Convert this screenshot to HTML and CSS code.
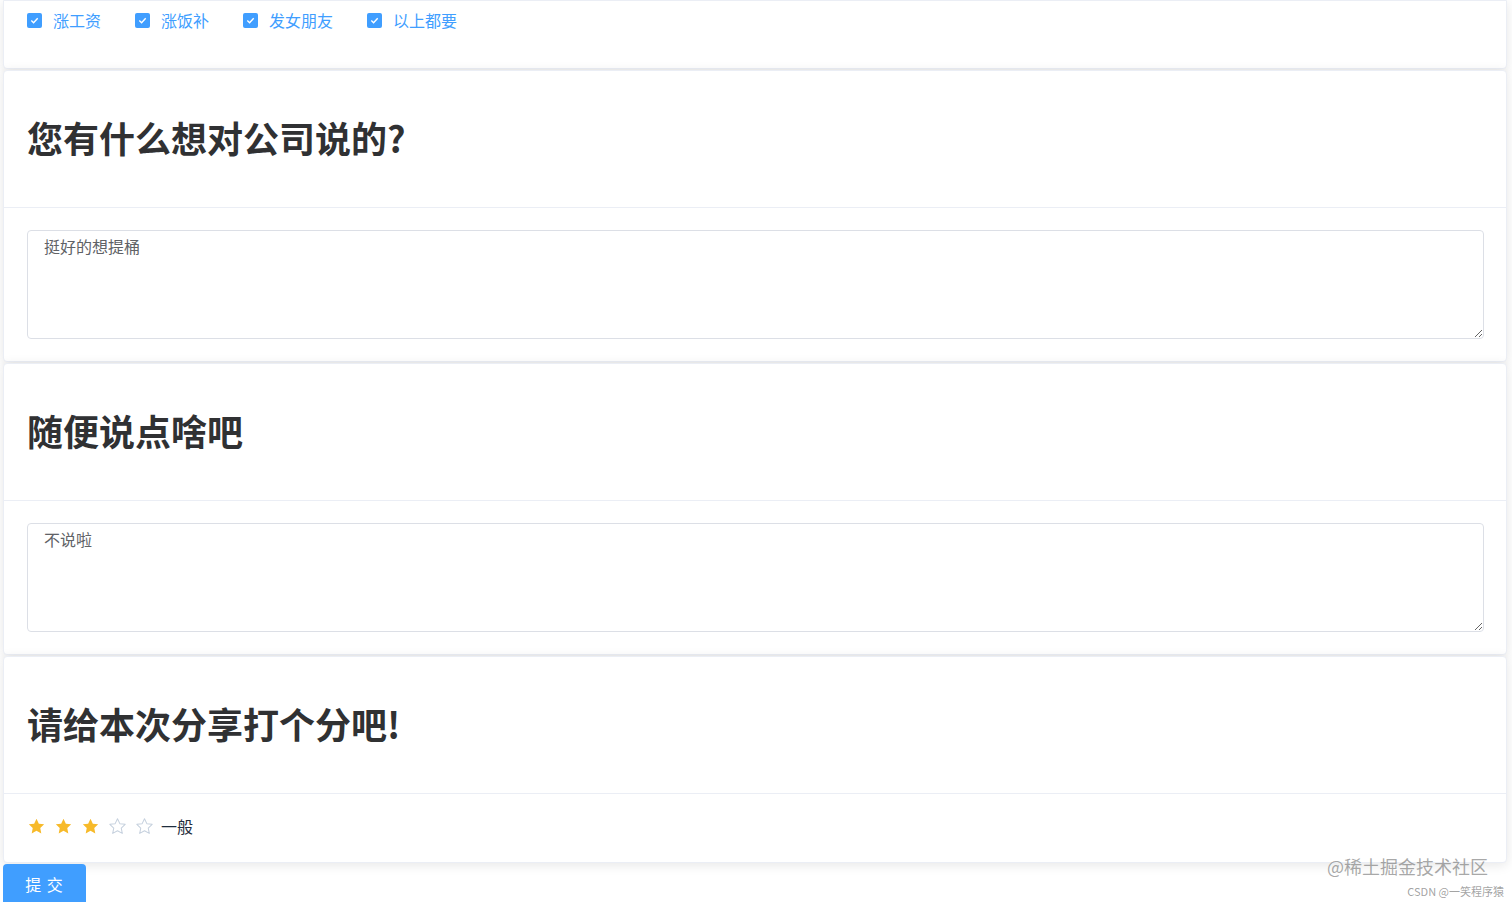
FILE: index.html
```html
<!DOCTYPE html>
<html lang="zh-CN">
<head>
<meta charset="utf-8">
<title>问卷</title>
<link rel="stylesheet" href="styles.css">
</head>
<body>
<div class="page">
  <div class="card card-first">
    <div class="check-body">
      <label class="check"><span class="box"><svg viewBox="0 0 15 15" width="15" height="15"><polyline points="4.3,7.6 6.6,9.8 10.7,5.2" fill="none" stroke="#fff" stroke-width="1.4"/></svg></span><span class="check-label">涨工资</span></label>
      <label class="check"><span class="box"><svg viewBox="0 0 15 15" width="15" height="15"><polyline points="4.3,7.6 6.6,9.8 10.7,5.2" fill="none" stroke="#fff" stroke-width="1.4"/></svg></span><span class="check-label">涨饭补</span></label>
      <label class="check"><span class="box"><svg viewBox="0 0 15 15" width="15" height="15"><polyline points="4.3,7.6 6.6,9.8 10.7,5.2" fill="none" stroke="#fff" stroke-width="1.4"/></svg></span><span class="check-label">发女朋友</span></label>
      <label class="check"><span class="box"><svg viewBox="0 0 15 15" width="15" height="15"><polyline points="4.3,7.6 6.6,9.8 10.7,5.2" fill="none" stroke="#fff" stroke-width="1.4"/></svg></span><span class="check-label">以上都要</span></label>
    </div>
  </div>

  <div class="card">
    <div class="card-header"><h1 class="q-title">您有什么想对公司说的?</h1></div>
    <div class="card-body">
      <textarea class="answer">挺好的想提桶</textarea>
    </div>
  </div>

  <div class="card">
    <div class="card-header"><h1 class="q-title">随便说点啥吧</h1></div>
    <div class="card-body">
      <textarea class="answer">不说啦</textarea>
    </div>
  </div>

  <div class="card">
    <div class="card-header"><h1 class="q-title">请给本次分享打个分吧!</h1></div>
    <div class="rate-body">
      <div class="rate">
        <svg class="star" viewBox="0 0 24 24"><path class="on" d="M12 2.2l2.95 6.2 6.75.85-4.95 4.7 1.3 6.75L12 17.35 5.95 20.7l1.3-6.75L2.3 9.25l6.75-.85z"/></svg>
        <svg class="star" viewBox="0 0 24 24"><path class="on" d="M12 2.2l2.95 6.2 6.75.85-4.95 4.7 1.3 6.75L12 17.35 5.95 20.7l1.3-6.75L2.3 9.25l6.75-.85z"/></svg>
        <svg class="star" viewBox="0 0 24 24"><path class="on" d="M12 2.2l2.95 6.2 6.75.85-4.95 4.7 1.3 6.75L12 17.35 5.95 20.7l1.3-6.75L2.3 9.25l6.75-.85z"/></svg>
        <svg class="star" viewBox="0 0 24 24"><path class="off" d="M12 2.2l2.95 6.2 6.75.85-4.95 4.7 1.3 6.75L12 17.35 5.95 20.7l1.3-6.75L2.3 9.25l6.75-.85z"/></svg>
        <svg class="star" viewBox="0 0 24 24"><path class="off" d="M12 2.2l2.95 6.2 6.75.85-4.95 4.7 1.3 6.75L12 17.35 5.95 20.7l1.3-6.75L2.3 9.25l6.75-.85z"/></svg>
        <span class="rate-text">一般</span>
      </div>
    </div>
  </div>

  <button class="submit" type="button">提 交</button>
</div>
<div class="watermark">
  <div class="wm-main">@稀土掘金技术社区</div>
  <div class="wm-sub">CSDN @一笑程序猿</div>
</div>
</body>
</html>
```

FILE: styles.css
```css
* { box-sizing: border-box; }
html, body {
  margin: 0;
  padding: 0;
  background: #fff;
  font-family: "Noto Sans CJK SC", "Noto Sans", sans-serif;
  height: 902px;
  overflow: hidden;
}
.page {
  padding: 0 5px 0 3px;
}
.card {
  background: #fff;
  border: 1px solid #ebeef5;
  border-radius: 4px;
  box-shadow: 0 2px 12px 0 rgba(0, 0, 0, 0.1);
  margin-bottom: 1px;
  overflow: hidden;
}
.card-first {
  border-top-left-radius: 0;
  border-top-right-radius: 0;
}
.check-body {
  display: flex;
  align-items: center;
  padding: 9px 20px 38px 23px;
  height: 67px;
}
.check {
  display: flex;
  align-items: center;
  margin-right: 34px;
  cursor: pointer;
  line-height: 20px;
}
.box {
  width: 15px;
  height: 15px;
  border-radius: 2px;
  background: #409eff;
  display: flex;
}
.check-label {
  padding-left: 11px;
  font-size: 16px;
  color: #409eff;
}
.card-header {
  padding: 18px 20px 18px 23px;
  border-bottom: 1px solid #ebeef5;
}
.q-title {
  margin: 22px 0 26px;
  font-size: 36px;
  line-height: 52px;
  font-weight: 700;
  color: #303133;
  letter-spacing: 0;
}
.card-body {
  padding: 22px 22px 22px 23px;
  display: flex;
}
.answer {
  display: block;
  width: 100%;
  height: 109px;
  padding: 3px 16px;
  font-family: "Noto Sans CJK SC", "Noto Sans", sans-serif;
  font-size: 16px;
  line-height: 24px;
  color: #606266;
  border: 1px solid #dcdfe6;
  border-radius: 4px;
  resize: vertical;
  outline: none;
  background: #fff;
}
.rate-body {
  padding: 18px 20px 23px 23px;
  height: 68px;
  display: flex;
  align-items: center;
}
.rate {
  display: flex;
  align-items: center;
  height: 24px;
}
.star {
  width: 19px;
  height: 19px;
  margin-right: 8px;
  display: block;
  position: relative;
  top: 1px;
}
.star .on { fill: #f7ba2a; }
.star .off { fill: none; stroke: #c6d1de; stroke-width: 1.3; stroke-linejoin: round; }
.rate-text {
  margin-left: -1px;
  font-size: 16px;
  color: #1f2d3d;
  line-height: 24px;
}
.submit {
  display: block;
  width: 83px;
  height: 42px;
  margin: 0;
  padding: 0 0 2px;
  border: none;
  border-radius: 4px 4px 0 0;
  background: #409eff;
  color: #fff;
  font-family: "Noto Sans CJK SC", "Noto Sans", sans-serif;
  font-size: 16px;
  letter-spacing: 1px;
  cursor: pointer;
}
.watermark {
  position: absolute;
  right: 8px;
  top: 853px;
  text-align: right;
  pointer-events: none;
}
.wm-main {
  font-size: 18px;
  line-height: 26px;
  color: rgba(110, 110, 110, 0.6);
  margin-right: 16px;
}
.wm-sub {
  font-size: 11px;
  line-height: 16px;
  color: rgba(110, 110, 110, 0.65);
  margin-top: 4px;
}
```
